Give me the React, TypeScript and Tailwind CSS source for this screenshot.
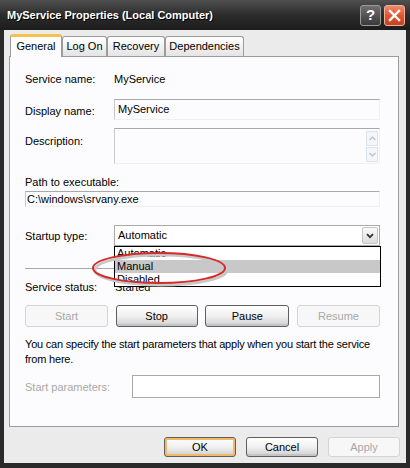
import React from "react";

const font = "font-['Liberation_Sans',Arial,sans-serif]";

const TextBox = ({ className = "", children }: { className?: string; children?: React.ReactNode }) => (
  <div
    className={`border-t border-l border-t-[#a9a9a9] border-l-[#c8c8c8] border-b border-r border-b-[#f0f0f0] border-r-[#f0f0f0] ${className}`}
  >
    {children}
  </div>
);

const XpButton = ({
  label,
  disabled,
  isDefault,
  className = "",
}: {
  label: string;
  disabled?: boolean;
  isDefault?: boolean;
  className?: string;
}) => {
  if (disabled) {
    return (
      <button className={`flex items-center justify-center rounded-[3px] border border-[#d4d4d4] bg-[#f7f7f7] text-[#a8a8a8] ${className}`}>
        {label}
      </button>
    );
  }
  return (
    <button
      className={`flex items-center justify-center rounded-[3px] border border-[#5f5f5f] bg-gradient-to-b from-[#ffffff] via-[#f0f0f0] to-[#cfcfcf] text-black ${
        isDefault ? "shadow-[inset_0_0_0_2px_#f2b868]" : "shadow-[inset_0_-2px_0_#c4c4c4]"
      } ${className}`}
    >
      {label}
    </button>
  );
};

const Tab = ({ label, active, width }: { label: string; active?: boolean; width: string }) =>
  active ? (
    <div
      className={`${width} relative z-10 -mb-px flex h-[23px] items-center justify-center rounded-t-[3px] border-x border-[#9c9c9c] border-t-[3px] border-t-[#f5c24a] bg-[#fcfcfe] pb-[1px] text-black`}
    >
      {label}
    </div>
  ) : (
    <div
      className={`${width} flex h-[20px] items-center justify-center rounded-t-[3px] border border-b-0 border-[#9c9c9c] bg-gradient-to-b from-[#ffffff] to-[#e4e4e4] text-black`}
    >
      {label}
    </div>
  );

export default function App() {
  return (
    <div className={`relative flex h-[468px] w-[410px] flex-col bg-[#2a2a2a] text-[11px] ${font}`}>
      {/* Title bar */}
      <div className="flex h-[30px] items-center bg-gradient-to-b from-[#505050] via-[#2c2c2c] to-[#1c1c1c] pl-[7px] pr-[5px]">
        <span className="text-[11px] font-bold text-white [text-shadow:1px_1px_0_#000]">
          MyService Properties (Local Computer)
        </span>
        <div className="ml-auto flex gap-[3px]">
          <div className="flex h-[21px] w-[21px] items-center justify-center rounded-[3px] border border-[#9a9a9a] bg-gradient-to-b from-[#707070] to-[#3a3a3a] text-[15px] font-bold text-white">
            ?
          </div>
          <div className="flex h-[21px] w-[21px] items-center justify-center rounded-[3px] border border-[#f0b0a0] bg-gradient-to-b from-[#f08a6a] via-[#e0552e] to-[#c8401c]">
            <svg width="13" height="13" viewBox="0 0 13 13">
              <path d="M2 2 L11 11 M11 2 L2 11" stroke="white" strokeWidth="2.4" strokeLinecap="square" />
            </svg>
          </div>
        </div>
      </div>

      {/* Body */}
      <div className="mx-[4px] mb-[5px] flex flex-1 flex-col bg-[#ebebeb]">
        {/* Tabs */}
        <div className="flex h-[26px] items-end pl-[6px]">
          <Tab label="General" active width="w-[52px]" />
          <Tab label="Log On" width="w-[45px]" />
          <Tab label="Recovery" width="w-[58px]" />
          <Tab label="Dependencies" width="w-[79px]" />
        </div>

        {/* Panel */}
        <div className="ml-[5px] h-[371px] w-[390px] border border-[#9c9c9c] bg-[#fcfcfe] pl-[15px] pr-[18px]">
          <div className="mt-[13px] flex h-[18px] items-center">
            <span className="w-[89px]">Service name:</span>
            <span>MyService</span>
          </div>

          <div className="mt-[11px] flex h-[21px]">
            <span className="w-[89px] pt-[4px]">Display name:</span>
            <TextBox className="flex-1 pl-[3px] pt-[1px]">MyService</TextBox>
          </div>

          <div className="mt-[8px] flex h-[36px]">
            <span className="w-[89px] pt-[5px]">Description:</span>
            <TextBox className="flex flex-1 justify-end pr-[1px] pt-[2px]">
              <div className="flex flex-col gap-[1px]">
                <div className="flex h-[15px] w-[12px] items-center justify-center border border-[#dde3ea] bg-[#f4f6f9]">
                  <svg width="7" height="5" viewBox="0 0 7 5">
                    <path d="M0.5 4 L3.5 1 L6.5 4" fill="none" stroke="#b4c0d0" strokeWidth="1.2" />
                  </svg>
                </div>
                <div className="flex h-[15px] w-[12px] items-center justify-center border border-[#dde3ea] bg-[#f4f6f9]">
                  <svg width="7" height="5" viewBox="0 0 7 5">
                    <path d="M0.5 1 L3.5 4 L6.5 1" fill="none" stroke="#b4c0d0" strokeWidth="1.2" />
                  </svg>
                </div>
              </div>
            </TextBox>
          </div>

          <div className="mt-[12px] h-[13px] leading-[13px]">Path to executable:</div>
          <TextBox className="mt-[2px] h-[16px] pl-[1px] leading-[14px]">C:\windows\srvany.exe</TextBox>

          <div className="mt-[18px] flex h-[21px] items-center">
            <span className="w-[89px] pt-[1px]">Startup type:</span>
            <div className="flex h-[21px] flex-1 items-center border border-[#a9a9a9] bg-white pl-[3px] pr-[1px]">
              <span>Automatic</span>
              <div className="ml-auto flex h-[17px] w-[16px] items-center justify-center rounded-[2px] border border-[#c4c4c4] bg-gradient-to-b from-[#fafafa] to-[#dcdcdc]">
                <svg width="8" height="6" viewBox="0 0 8 6">
                  <path d="M1 1.2 L4 4.2 L7 1.2" fill="none" stroke="#333" strokeWidth="1.8" />
                </svg>
              </div>
            </div>
          </div>

          <div className="mt-[22px] h-px bg-[#a8a8a8]" />

          <div className="mt-[12px] flex h-[13px] items-center">
            <span className="w-[90px]">Service status:</span>
            <span>Started</span>
          </div>

          <div className="mt-[11px] flex h-[22px] justify-between">
            <XpButton label="Start" disabled className="w-[83px]" />
            <XpButton label="Stop" className="w-[82px]" />
            <XpButton label="Pause" className="w-[84px]" />
            <XpButton label="Resume" disabled className="w-[83px]" />
          </div>

          <p className="mt-[10px] whitespace-nowrap leading-[15px] tracking-[-0.2px]">
            You can specify the start parameters that apply when you start the service
            <br />
            from here.
          </p>

          <div className="mt-[8px] flex h-[23px]">
            <span className="w-[107px] pt-[4px] text-[#a8a8a8]">Start parameters:</span>
            <div className="flex-1 border border-[#a9a9a9] bg-white" />
          </div>
        </div>

        {/* Dialog buttons */}
        <div className="mt-[10px] flex justify-end gap-[10px] pr-[6px]">
          <XpButton label="OK" isDefault className="h-[20px] w-[72px]" />
          <XpButton label="Cancel" className="h-[20px] w-[72px]" />
          <XpButton label="Apply" disabled className="h-[20px] w-[72px]" />
        </div>
      </div>

      {/* Open dropdown list */}
      <div className="absolute left-[114px] top-[246px] z-20 flex h-[41px] w-[267px] flex-col border border-black bg-white text-[11px] leading-[13px]">
        <div className="h-[13px] pl-[2px]">Automatic</div>
        <div className="h-[13px] bg-[#c8c8c8] pl-[2px]">Manual</div>
        <div className="h-[13px] pl-[2px]">Disabled</div>
      </div>

      {/* Red annotation ellipse */}
      <svg className="absolute left-[88px] top-[248px] z-30" width="142" height="40" viewBox="0 0 142 40">
        <ellipse cx="71" cy="20" rx="66" ry="15" fill="none" stroke="#c8c8c8" strokeWidth="3" transform="translate(2 2)" />
        <ellipse cx="71" cy="20" rx="66" ry="15" fill="none" stroke="#d42a2a" strokeWidth="2" />
      </svg>
    </div>
  );
}
